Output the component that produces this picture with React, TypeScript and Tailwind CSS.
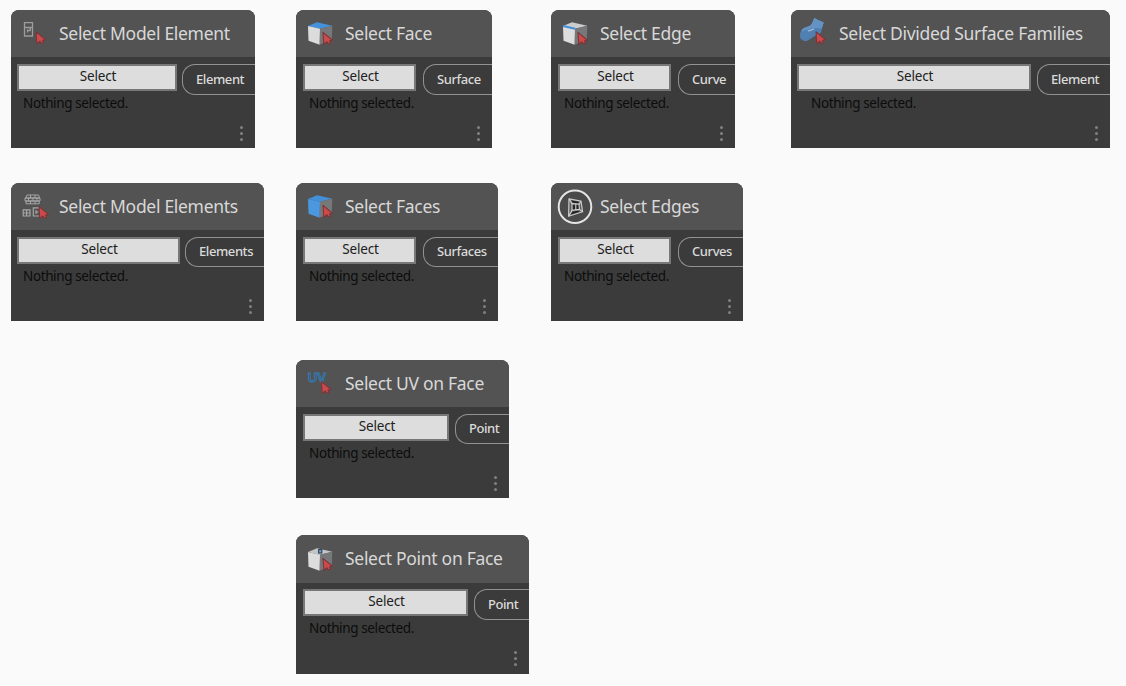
import type { ReactNode } from "react";

function Cursor({ x, y }: { x: number; y: number }) {
  return (
    <path
      transform={`translate(${x} ${y})`}
      d="M0 0 L9.5 7.8 L6.6 8.4 L7.4 11 L5.2 11.6 L4 9.4 L0.8 11.8 Z"
      fill="#cb4a4b"
      stroke="#7d3538"
      strokeWidth="1.1"
      strokeLinejoin="round"
    />
  );
}

type CubeProps = { top: string; left: string; children?: ReactNode };

function Cube({ top, left, children }: CubeProps) {
  return (
    <>
      <path d="M12 16 L21 12.2 L36.3 15.8 L24 18.8 Z" fill={top} />
      <path d="M12 16 L24 18.8 L23.7 34.8 L12.5 30.8 Z" fill={left} />
      <path d="M24 18.8 L36.3 15.8 L35.8 29.8 L23.7 34.8 Z" fill="#777879" />
      {children}
      <Cursor x={27} y={22.4} />
    </>
  );
}

function DoorIcon() {
  return (
    <>
      <g fill="none" stroke="#9c9c9c" strokeWidth="1.3">
        <path d="M13.5 12.6 H21.5 V26 H13.5 Z" />
        <path d="M14 17.5 H21 M16.5 19.5 V22.5 M19.2 18 V20.5 H17" />
      </g>
      <Cursor x={25} y={21.8} />
    </>
  );
}

function ElementsIcon() {
  return (
    <>
      <g fill="none" stroke="#a6a6a6" strokeWidth="1">
        <path d="M16 12 H27.5 L28.6 15 H14.6 Z M14 15 H29 V18 H14 Z M15 18 H28.2 V20.8 H15 Z" />
        <path d="M19.5 12 V15 M24 12 V15 M17.5 15 V18 M22 15 V18 M26 15 V18 M19.5 18 V21 M24 18 V21" />
        <path d="M12.2 26.8 H19 V33 H12.2 Z M15.6 26.8 V33 M12.2 30 H19" strokeWidth="1.2" />
        <path d="M28 24.8 H22.3 V33 H28 M25 27.3 V31 M25 28.8 H27.5" strokeWidth="1.2" />
      </g>
      <Cursor x={28} y={23.6} />
    </>
  );
}

function EdgesIcon() {
  return (
    <>
      <circle cx="24" cy="23.7" r="16.3" fill="#4a4a4a" stroke="#e4e4e4" strokeWidth="2" />
      <path d="M18 15.8 L30 18.2 L31.6 28.8 L17.6 33.2 Z" fill="#5c5c5c" stroke="#c9c9c9" strokeWidth="1.2" strokeLinejoin="round" />
      <path d="M20.4 17.4 L27.8 18.8 L27 20.4 L21.6 19.4 Z M20 31.2 L21.4 28.8 L27 27.8 L28.4 28.8 Z" fill="#202020" />
      <path d="M21 20.6 L28 21.2 L28.4 26.4 L21 27.4 Z" fill="#262626" stroke="#d4d4d4" strokeWidth="1.1" />
      <path d="M24.8 20.8 V27 M18 15.8 L21 20.6 M30 18.2 L28 21.2 M31.6 28.8 L28.4 26.4 M17.6 33.2 L21 27.4" fill="none" stroke="#d4d4d4" strokeWidth="1.1" />
    </>
  );
}

function UvIcon() {
  return (
    <>
      <text
        x="11.8"
        y="22"
        fontSize="12.5"
        fontWeight="700"
        fontFamily="Liberation Sans, sans-serif"
        textLength="18.4"
        lengthAdjust="spacingAndGlyphs"
        fill="#3f5a70"
        stroke="#347db5"
        strokeWidth="0.8"
      >
        UV
      </text>
      <Cursor x={25.4} y={21.6} />
    </>
  );
}

function SurfaceIcon() {
  return (
    <>
      <path
        d="M23.4 7.8 C26 10.2 29 10.8 32.8 12.4 C31.6 15.6 31 18.6 30.2 22 C28 25.4 25.4 25 22.6 26.8 C19.4 28.6 17 31.4 14 31.2 C12.2 30.6 10.4 29.6 9.4 28.4 C8.6 25.2 8.8 21.6 11.4 19 C13.6 17 16.6 17.2 19.4 15.2 C21.6 13.4 22 10.6 23.4 7.8 Z"
        fill="#5080b2"
      />
      <path
        d="M23.4 7.8 C26 10.2 29 10.8 32.8 12.4 C31.8 15 31.4 16.8 30.6 18.6 C27.8 17.2 25 18.4 21 17.8 C18.4 20 14.2 20 10 21.4 C12 16.8 16.6 17.2 19.4 15.2 C21.6 13.4 22 10.6 23.4 7.8 Z"
        fill="#6493c3"
      />
      <path d="M17.5 20.8 C19.4 20.2 20.6 20 22.5 19" fill="none" stroke="#8fb2d6" strokeWidth="1.5" strokeLinecap="round" />
      <Cursor x={25} y={21.8} />
    </>
  );
}

type NodeProps = {
  title: string;
  size: string;
  button: string;
  port: string;
  portClass: string;
  icon: ReactNode;
  titleClass?: string;
  headerClass?: string;
  bodyClass?: string;
  statusClass?: string;
};

function Node({
  title,
  size,
  button,
  port,
  portClass,
  icon,
  titleClass = "",
  headerClass = "h-[47px]",
  bodyClass = "h-[38px] pt-[7px]",
  statusClass = "pl-3",
}: NodeProps) {
  return (
    <section className={`${size} flex shrink-0 flex-col overflow-hidden rounded-t-lg bg-[#3b3b3b]`}>
      <header className={`${headerClass} flex shrink-0 items-center bg-[#535353]`}>
        <svg className="h-[47px] w-12 shrink-0" viewBox="0 0 48 47">
          {icon}
        </svg>
        <h2 className={`${titleClass} whitespace-nowrap pb-0.5 text-[17.5px] leading-6 tracking-[-0.3px] text-[#d8d8d8]`}>
          {title}
        </h2>
      </header>
      <div className={`${bodyClass} flex shrink-0 items-start justify-between pl-1.5`}>
        <button
          className={`${button} h-[27px] border-2 border-[#777777] bg-[#dddddd] pb-0.5 pl-0.5 text-center text-[13.5px] leading-[21px] tracking-[-0.15px] text-[#202020]`}
        >
          Select
        </button>
        <div className={`${portClass} flex items-center rounded-l-[13px] border border-r-0 border-[#929292] pb-0.5 pl-[13px]`}>
          <span className="whitespace-nowrap text-[13px] font-medium leading-5 tracking-[-0.42px] text-[#dadada]">{port}</span>
        </div>
      </div>
      <p className={`${statusClass} h-[18px] whitespace-nowrap text-[13.5px] leading-[17px] tracking-[-0.38px] text-[#0c0c0c]`}>
        Nothing selected.
      </p>
      <div className="mt-[13px] flex flex-col items-end gap-[3px] pr-3">
        <i className="size-[3px] rounded-full bg-[#808080]" />
        <i className="size-[3px] rounded-full bg-[#808080]" />
        <i className="size-[3px] rounded-full bg-[#808080]" />
      </div>
    </section>
  );
}

export default function App() {
  return (
    <main className="flex h-[686px] w-[1126px] items-start overflow-hidden bg-[#fafafa] pl-[11px] pt-2.5 font-['Noto_Sans','Open_Sans',sans-serif]">
      <div className="flex w-[285px] shrink-0 flex-col gap-[35px]">
        <Node title="Select Model Element" size="h-[138px] w-[244px]" button="w-[160px]" port="Element" portClass="h-[31px] w-[73px]" icon={<DoorIcon />} />
        <Node title="Select Model Elements" size="h-[138px] w-[253px]" button="w-[163px]" port="Elements" portClass="h-[30px] w-[79px]" icon={<ElementsIcon />} />
      </div>
      <div className="flex w-[255px] shrink-0 flex-col">
        <Node
          title="Select Face"
          titleClass="pl-px"
          size="h-[138px] w-[196px]"
          button="w-[113px] ml-px"
          statusClass="pl-[13px]"
          port="Surface"
          portClass="h-[31px] w-[69px]"
          icon={<Cube top="#4592dc" left="#dcdcdc" />}
        />
        <div className="mt-[35px]">
          <Node
            title="Select Faces"
            titleClass="pl-px"
            size="h-[138px] w-[202px]"
            button="w-[113px] ml-px"
            statusClass="pl-[13px]"
            port="Surfaces"
            portClass="h-[30px] w-[75px]"
            icon={<Cube top="#4390d9" left="#4b98e0" />}
          />
        </div>
        <div className="mt-[39px]">
          <Node
            title="Select UV on Face"
            titleClass="pl-px"
            size="h-[138px] w-[213px]"
            button="w-[146px] ml-px"
            statusClass="pl-[13px]"
            port="Point"
            portClass="h-[30px] w-[54px]"
            icon={<UvIcon />}
          />
        </div>
        <div className="mt-[37px]">
          <Node
            title="Select Point on Face"
            titleClass="pl-px"
            size="h-[139px] w-[233px]"
            headerClass="h-12"
            bodyClass="h-[37px] pt-[6px]"
            button="w-[165px] ml-px"
            statusClass="pl-[13px]"
            port="Point"
            portClass="h-[31px] w-[55px]"
            icon={
              <Cube top="#c5c5c5" left="#dddddd">
                <rect x="22.6" y="13.6" width="3.2" height="3.4" fill="#78a3ca" stroke="#27445e" strokeWidth="1.1" />
              </Cube>
            }
          />
        </div>
      </div>
      <div className="flex w-60 shrink-0 flex-col gap-[35px]">
        <Node
          title="Select Edge"
          titleClass="pl-px"
          size="h-[138px] w-[184px]"
          button="w-[113px] ml-px"
          statusClass="pl-[13px]"
          port="Curve"
          portClass="h-[31px] w-[57px]"
          icon={
            <Cube top="#cccccc" left="#dddddd">
              <path d="M12 16 L24 18.8" stroke="#3e8fdc" strokeWidth="2" />
            </Cube>
          }
        />
        <Node
          title="Select Edges"
          titleClass="pl-px"
          size="h-[138px] w-[192px]"
          button="w-[113px] ml-px"
          statusClass="pl-[13px]"
          port="Curves"
          portClass="h-[30px] w-[65px]"
          icon={<EdgesIcon />}
        />
      </div>
      <Node
        title="Select Divided Surface Families"
        size="h-[138px] w-[319px]"
        button="w-[234px]"
        port="Element"
        portClass="h-[31px] w-[73px]"
        statusClass="pl-5"
        icon={<SurfaceIcon />}
      />
    </main>
  );
}
